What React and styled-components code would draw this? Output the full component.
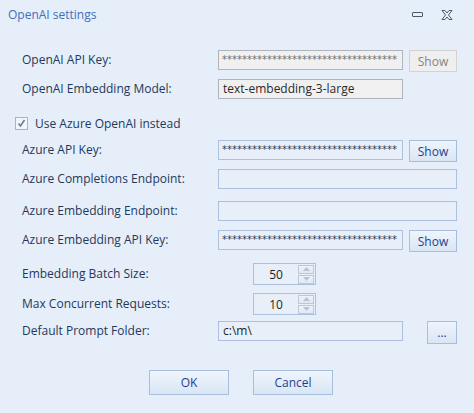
import React from "react";
import styled, { createGlobalStyle, css } from "styled-components";

const GlobalStyle = createGlobalStyle`
  html, body {
    margin: 0;
    padding: 0;
    background: #e6eef9;
  }
  body {
    font-family: "Open Sans", "Noto Sans", sans-serif;
    font-size: 12px;
  }
`;

const Window = styled.div`
  width: 474px;
  height: 413px;
  background: #e6eef9;
  color: #1e395b;
  box-sizing: border-box;
  overflow: hidden;
`;

const TitleBar = styled.div`
  height: 30px;
  display: flex;
  align-items: center;
  padding-left: 8px;
  padding-right: 12px;
`;

const Title = styled.div`
  flex: 1;
  color: #3f70bb;
  font-size: 12px;
  margin-top: -1px;
`;

const Caption = styled.div`
  width: 30px;
  height: 20px;
  display: flex;
  align-items: center;
  justify-content: center;
`;

const Form = styled.div`
  padding-left: 22px;
  padding-top: 20px;
  display: flex;
  flex-direction: column;
`;

const Row = styled.div`
  display: flex;
  align-items: flex-start;
  height: ${({ $h }) => $h}px;
  margin-top: ${({ $gap }) => $gap}px;
`;

const Label = styled.div`
  width: 196px;
  font-size: 12px;
  line-height: ${({ $lh }) => $lh || 20}px;
  white-space: nowrap;
`;

const Input = styled.div`
  box-sizing: border-box;
  width: ${({ $w }) => $w || 185}px;
  height: 20px;
  border: 1px solid #abc1de;
  background: #e8eff9;
  padding: 0 4px;
  line-height: 18px;
  font-size: 12px;
  color: #1e1e1e;
  white-space: nowrap;
  overflow: hidden;
  ${({ $disabled }) =>
    $disabled &&
    css`
      background: #f0f0f0;
      border-color: #adb4bc;
      color: #2a2a2a;
    `}
`;

const Stars = styled.span`
  font-family: "DejaVu Sans", sans-serif;
  font-size: 10px;
  letter-spacing: 0;
  margin-left: -1px;
  color: ${({ $grey }) => ($grey ? "#6d6d6d" : "#333a55")};
  position: relative;
  top: -1px;
`;

const Button = styled.div`
  box-sizing: border-box;
  width: ${({ $w }) => $w ?? 48}px;
  height: ${({ $hh }) => $hh ?? 22}px;
  margin-left: ${({ $ml }) => $ml ?? 6}px;
  border: 1px solid #a7bfdd;
  background: linear-gradient(#eef4fc, #dae6f5);
  color: #1e3f8f;
  font-size: 12px;
  display: flex;
  align-items: center;
  justify-content: center;
  ${({ $disabled }) =>
    $disabled &&
    css`
      background: #efefef;
      border-color: #d3d3d3;
      color: #848484;
    `}
`;

const CheckRow = styled.div`
  display: flex;
  align-items: center;
  height: 13px;
  margin-top: 18px;
  margin-left: -7px;
`;

const Box = styled.div`
  box-sizing: border-box;
  width: 13px;
  height: 13px;
  border: 1px solid #a3b6cf;
  background: #f2f5fa;
  display: flex;
  align-items: center;
  justify-content: center;
  margin-right: 7px;
`;

const CheckText = styled.div`
  font-size: 12px;
  line-height: 13px;
`;

const Spinner = styled.div`
  box-sizing: border-box;
  width: 63px;
  height: 22px;
  margin-left: 35px;
  border: 1px solid #abc1de;
  background: #e8eff9;
  display: flex;
  align-items: center;
  padding-right: 1px;
`;

const SpinValue = styled.div`
  flex: 1;
  text-align: center;
  font-size: 12px;
  color: #1e1e1e;
`;

const SpinButtons = styled.div`
  display: flex;
  flex-direction: column;
  gap: 1px;
`;

const SpinButton = styled.div`
  box-sizing: border-box;
  width: 16px;
  height: 9px;
  border: 1px solid #b8c9df;
  background: linear-gradient(#eef3fa, #e0e8f4);
  display: flex;
  align-items: center;
  justify-content: center;
`;

const Footer = styled.div`
  display: flex;
  justify-content: center;
  gap: 24px;
  margin-top: 26px;
  padding-right: 14px;
`;

const Arrow = ({ up }) => (
  <svg width="7" height="4" viewBox="0 0 7 4">
    <path d={up ? "M0 4 L3.5 0 L7 4 Z" : "M0 0 L3.5 4 L7 0 Z"} fill="#b7c4d6" />
  </svg>
);

const Spin = ({ value }) => (
  <Spinner>
    <SpinValue>{value}</SpinValue>
    <SpinButtons>
      <SpinButton>
        <Arrow up />
      </SpinButton>
      <SpinButton>
        <Arrow />
      </SpinButton>
    </SpinButtons>
  </Spinner>
);

const stars = "*".repeat(35);

export default function App() {
  return (
    <Window>
      <GlobalStyle />
      <TitleBar>
        <Title>OpenAI settings</Title>
        <Caption>
          <svg width="11" height="6" viewBox="0 0 11 6">
            <rect x="0.5" y="0.5" width="10" height="4" rx="0.5" fill="none" stroke="#4b5a70" />
          </svg>
        </Caption>
        <Caption>
          <svg width="12" height="10" viewBox="0 0 12 10">
            <path
              d="M1 0.5 H4 L6 3 L8 0.5 H11 L7.5 5 L11 9.5 H8 L6 7 L4 9.5 H1 L4.5 5 Z"
              fill="none"
              stroke="#4b5a70"
              strokeWidth="1"
            />
          </svg>
        </Caption>
      </TitleBar>
      <Form>
        <Row $h={22} $gap={0}>
          <Label>OpenAI API Key:</Label>
          <Input $disabled>
            <Stars $grey>{stars}</Stars>
          </Input>
          <Button $disabled>Show</Button>
        </Row>
        <Row $h={20} $gap={7}>
          <Label>OpenAI Embedding Model:</Label>
          <Input $disabled>text-embedding-3-large</Input>
        </Row>
        <CheckRow>
          <Box>
            <svg width="9" height="9" viewBox="0 0 9 9">
              <path d="M1.5 4.5 L3.5 7 L7.5 1" fill="none" stroke="#6a7d99" strokeWidth="1.6" />
            </svg>
          </Box>
          <CheckText>Use Azure OpenAI instead</CheckText>
        </CheckRow>
        <Row $h={22} $gap={10}>
          <Label>Azure API Key:</Label>
          <Input>
            <Stars>{stars}</Stars>
          </Input>
          <Button>Show</Button>
        </Row>
        <Row $h={20} $gap={7}>
          <Label>Azure Completions Endpoint:</Label>
          <Input $w={239} />
        </Row>
        <Row $h={20} $gap={12}>
          <Label>Azure Embedding Endpoint:</Label>
          <Input $w={239} />
        </Row>
        <Row $h={22} $gap={9}>
          <Label>Azure Embedding API Key:</Label>
          <Input>
            <Stars>{stars}</Stars>
          </Input>
          <Button>Show</Button>
        </Row>
        <Row $h={22} $gap={11}>
          <Label $lh={22}>Embedding Batch Size:</Label>
          <Spin value="50" />
        </Row>
        <Row $h={22} $gap={8}>
          <Label $lh={22}>Max Concurrent Requests:</Label>
          <Spin value="10" />
        </Row>
        <Row $h={23} $gap={6}>
          <Label>Default Prompt Folder:</Label>
          <Input>c:\m\</Input>
          <Button $w={30} $ml={24} $hh={23}>
            ...
          </Button>
        </Row>
        <Footer>
          <Button $w={80} $hh={25} $ml={0}>
            OK
          </Button>
          <Button $w={80} $hh={25} $ml={0}>
            Cancel
          </Button>
        </Footer>
      </Form>
    </Window>
  );
}
